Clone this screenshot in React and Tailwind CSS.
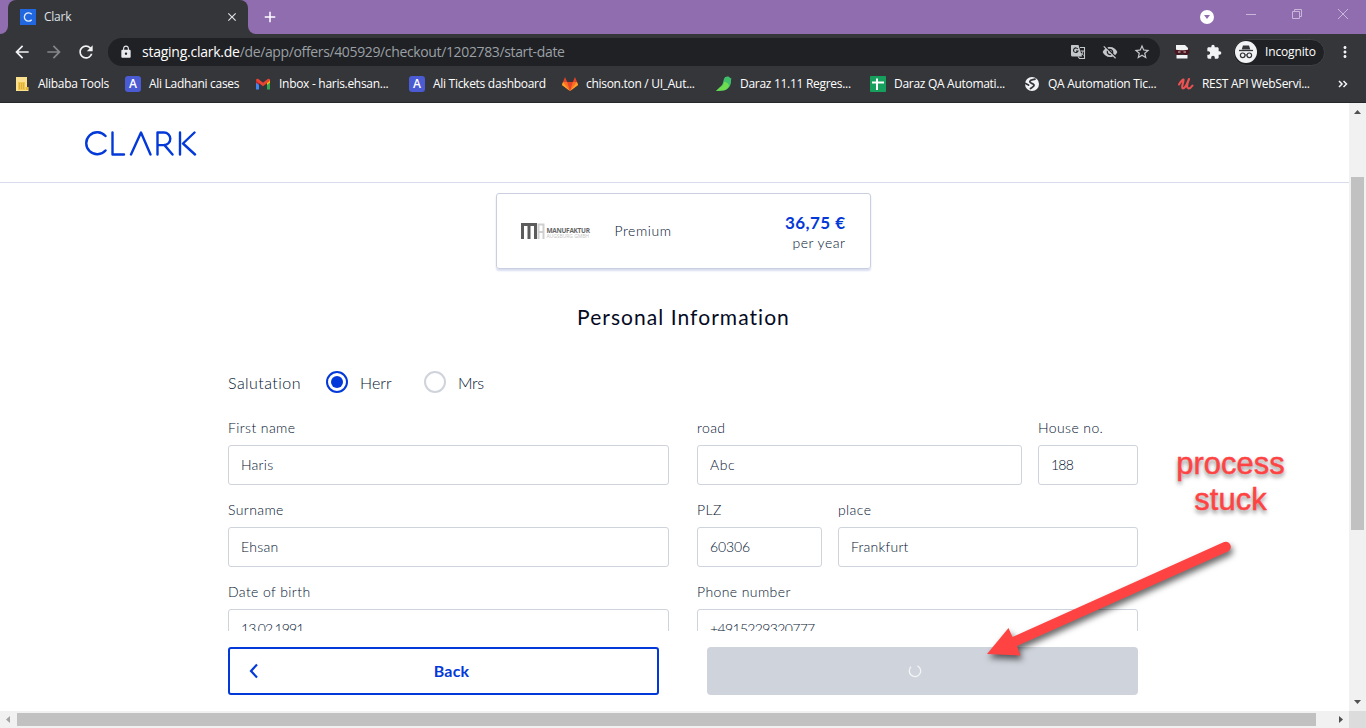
import React from "react";
import {
  MdArrowBack, MdArrowForward, MdRefresh, MdLock, MdVisibilityOff,
  MdStarBorder, MdExtension, MdMoreVert, MdClose, MdAdd,
} from "react-icons/md";

const Svg = ({ w = 16, h = 16, vb, className = "", children }) => (
  <svg width={w} height={h} viewBox={vb || `0 0 ${w} ${h}`} className={`shrink-0 ${className}`} fill="none">
    {children}
  </svg>
);

const FolderIcon = () => (
  <Svg>
    <path d="M2 1h11v10h1.500v4H2z" fill="#fbe08d" />
    <path d="M11.500 11h2.500v3h-2.500z" fill="#e9b93c" />
    <path d="M4 6h7v8H4z" fill="#f0c653" />
    <path d="M5 8h1M7 8h1M9 8h1M5 10h1M7 10h1M9 10h1M5 12h1M7 12h1M9 12h1" stroke="#c99b27" />
  </Svg>
);
const AIcon = () => (
  <span className="flex h-4 w-4 shrink-0 items-center justify-center rounded-[3px] bg-[#4a5bd4] text-[12px] leading-4 font-semibold text-white">A</span>
);
const GmailIcon = () => (
  <Svg>
    <path d="M1 4v9.500h3V7z" fill="#4285f4" />
    <path d="M12 7v6.500h3V4z" fill="#34a853" />
    <path d="M1 3.500 4 5.500V9L1 6.500z" fill="#c5221f" />
    <path d="M12 5.500l3-2v3L12 9z" fill="#fbbc04" />
    <path d="M1.300 3 3 2.800l5 4 5-4 1.700.2v2L8 10.200 1.300 5z" fill="#ea4335" />
  </Svg>
);
const GitlabIcon = () => (
  <Svg>
    <path d="M8 15 0 9 1 6h14l1 3z" fill="#fc6d26" />
    <path d="M8 15 0 9l1-3z" fill="#fca326" />
    <path d="M8 15l8-6-1-3z" fill="#fca326" />
    <path d="M8 15 5.200 6h5.600z" fill="#e24329" />
    <path d="M1 6 3 1l2.200 5zM15 6l-2-5-2.200 5z" fill="#e24329" />
  </Svg>
);
const BirdIcon = () => (
  <Svg>
    <path d="M8 3c1-3 5-3 6-1l1.500.5L15 4c.5 6-3 10-8 10.500L0 15l4-4c3-2 3-5 4-8z" fill="#3fbf6a" />
    <path d="M8 6c3 0 5 2 5 4-1.500 3-4 4.500-7 4.500L0 15l4.500-4C7 9 8 8 8 6z" fill="#6fdc50" />
  </Svg>
);
const SheetIcon = () => (
  <Svg>
    <rect width="16" height="16" rx="1" fill="#17a05d" />
    <path d="M7 2.500v11.500M2 6.500h12" stroke="#fff" strokeWidth="2" />
  </Svg>
);
const GlobeIcon = () => (
  <Svg>
    <circle cx="8" cy="8" r="7" fill="#f1f3f4" />
    <path d="M11 3.200C9 4 6.500 3.500 5.800 5.500c-.5 1.800 3.700 1.700 4.200 3.500.3 1.500-2 2.500-3.500 3.500M1.500 7.500l3 1.500" stroke="#35363a" strokeWidth="1.800" strokeLinecap="round" />
  </Svg>
);
const UdemyIcon = () => (
  <Svg>
    <path d="M1 8.500C2.500 6 4 4 5.500 3.500 6.500 4 2.500 12 5 12.500c2.500 0 5-7 6-9.500-1.500 4-3 9-.5 9.500 1.500 0 3-1.500 4-3" stroke="#ec5252" strokeWidth="2.100" strokeLinecap="round" strokeLinejoin="round" />
  </Svg>
);
const TranslateIcon = ({ className }) => (
  <Svg className={className}>
    <path d="M1.500 1h7l3.500 11.500H2.500a1.500 1.500 0 0 1-1.500-1.500V1.500z" fill="#c4c7ca" />
    <path d="M7.800 5A2.300 2.300 0 1 0 8 7H6" stroke="#202124" strokeWidth="1.100" />
    <path d="M10 3.500h4.500v11H9.500L8 12.500" stroke="#c4c7ca" strokeWidth="1.100" />
    <path d="M10.500 7h3.500M13 7c-.3 2-1 3-2.300 4.500M11.500 9l2 2.500" stroke="#c4c7ca" />
  </Svg>
);

const BOOKMARKS = [
  { icon: <FolderIcon />, text: "Alibaba Tools", cls: "w-[111px]" },
  { icon: <AIcon />, text: "Ali Ladhani cases", cls: "w-[130px]" },
  { icon: <GmailIcon />, text: "Inbox - haris.ehsan...", cls: "w-[154px]" },
  { icon: <AIcon />, text: "Ali Tickets dashboard", cls: "w-[153px]" },
  { icon: <GitlabIcon />, text: "chison.ton / UI_Aut...", cls: "w-[154px]" },
  { icon: <BirdIcon />, text: "Daraz 11.11 Regres...", cls: "w-[154px]" },
  { icon: <SheetIcon />, text: "Daraz QA Automati...", cls: "w-[154px]" },
  { icon: <GlobeIcon />, text: "QA Automation Tic...", cls: "w-[154px]" },
  { icon: <UdemyIcon />, text: "REST API WebServi...", cls: "w-[154px]" },
];

const TabStrip = () => (
  <div className="flex h-[34px] bg-[#8f6dae]">
    <div className="flex w-2 items-end bg-[#35363a]">
      <div className="h-[34px] w-2 rounded-br-[8px] bg-[#8f6dae]" />
    </div>
    <div className="w-[240px] bg-[#8f6dae]">
      <div className="flex h-[34px] items-center rounded-t-[8px] bg-[#35363a] pr-[9px] pl-3">
        <span className="flex h-4 w-4 items-center justify-center bg-[#2168e0]">
          <Svg w={12} h={12}><path d="M9.700 3.200A4.200 4.200 0 1 0 9.700 8.800" stroke="#e6eefc" strokeWidth="1.300" /></Svg>
        </span>
        <span className="ml-2 flex-1 text-[12px] tracking-[-0.25px] text-[#dfe1e5]">Clark</span>
        <MdClose className="h-[14px] w-[14px] text-[#dfe1e5]" />
      </div>
    </div>
    <div className="w-2 bg-[#35363a]">
      <div className="h-[34px] w-2 rounded-bl-[8px] bg-[#8f6dae]" />
    </div>
    <div className="flex flex-1 items-center pl-[5px]">
      <MdAdd className="h-[18px] w-[18px] text-white" />
    </div>
    <Svg w={166} h={34} className="text-[#c9b6d9]">
      <circle cx="7" cy="17" r="7" fill="#fff" />
      <path d="M4 15h6l-3 4z" fill="#8f6dae" />
      <path d="M46 14.500h10M92.500 11.500h7v7h-7zM94.500 11v-1.500h7v7H100M138 9l10 10M148 9l-10 10" stroke="currentColor" />
    </Svg>
  </div>
);

const Toolbar = () => (
  <div className="flex h-[36px] items-center bg-[#35363a] pl-3">
    <MdArrowBack className="h-5 w-5 text-[#f1f3f4]" />
    <MdArrowForward className="ml-3 h-5 w-5 text-[#85868a]" />
    <MdRefresh className="ml-3 h-5 w-5 text-[#f1f3f4]" />
    <div className="ml-3 flex h-7 w-[1052px] items-center rounded-full bg-[#202124] pr-[9px] pl-[11px]">
      <MdLock className="h-[14px] w-[14px] text-[#e8eaed]" />
      <span className="ml-[9px] flex-1 pb-px text-[14px] tracking-[-0.36px] text-[#9aa0a6]">
        <span className="tracking-[-0.25px] text-white">staging.clark.de</span>/de/app/offers/405929/checkout/1202783/start-date
      </span>
      <TranslateIcon className="mr-4 translate-x-px" />
      <MdVisibilityOff className="mr-4 h-4 w-4 translate-x-px text-[#c4c7ca]" />
      <MdStarBorder className="h-[18px] w-[18px] text-[#c4c7ca]" />
    </div>
    <Svg w={16} h={16} className="ml-[14px]">
      <path d="M2 1h9l3 3v4H2z" fill="#f1f3f4" />
      <path d="M2.500 11h11v3.500h-11z" fill="#f1f3f4" />
      <path d="M0.500 5.500c4 1 11 1 15 0 0 3-1 5.500-4.500 5.500L8 9.500 5 11c-3.500 0-4.500-2.500-4.500-5.500z" fill="#4a1620" />
      <path d="M4 8h2.500M9.500 8H12" stroke="#e8c9cd" />
    </Svg>
    <MdExtension className="ml-4 h-4 w-4 text-[#f1f3f4]" />
    <div className="ml-[11px] flex h-[27px] w-[92px] items-center rounded-full border border-[#3f4145] bg-[#202124] pl-px">
      <Svg w={22} h={22}>
        <circle cx="11" cy="11" r="11" fill="#f1f3f4" />
        <path d="M8 4.500h6l1.300 4H6.700z" fill="#35363a" />
        <path d="M4 9.500h14" stroke="#35363a" strokeWidth="1.300" />
        <circle cx="7.700" cy="14.300" r="2.300" stroke="#35363a" strokeWidth="1.200" />
        <circle cx="14.300" cy="14.300" r="2.300" stroke="#35363a" strokeWidth="1.200" />
        <path d="M10 14h2" stroke="#35363a" strokeWidth="1.200" />
      </Svg>
      <span className="ml-2 text-[12px] tracking-[-0.15px] text-white">Incognito</span>
    </div>
    <MdMoreVert className="ml-[11px] h-[18px] w-[18px] text-[#f1f3f4]" />
  </div>
);

const BookmarksBar = () => (
  <div className="flex h-[33px] items-center border-b border-[#26272a] bg-[#35363a] pb-1 pl-[14px]">
    {BOOKMARKS.map((b) => (
      <div key={b.text} className={`flex shrink-0 items-center ${b.cls}`}>
        {b.icon}
        <span className="ml-2 text-[12px] tracking-[-0.29px] whitespace-nowrap text-white">{b.text}</span>
      </div>
    ))}
    <Svg w={10} h={10} className="ml-[6px]"><path d="M1 2l3 3-3 3M5.500 2l3 3-3 3" stroke="#f1f3f4" strokeWidth="1.500" /></Svg>
  </div>
);

const Field = ({ label, value, cls, track = "tracking-[0.25px]" }) => (
  <div className={cls}>
    <div className="h-[26px] text-[14px] leading-[18px] tracking-[0.4px]">{label}</div>
    <div className={`flex h-10 items-center rounded-[3px] border border-[#cfd3dc] px-3 pb-[2px] text-[14px] ${track}`}>{value}</div>
  </div>
);

const Form = () => (
  <div className="mx-auto flex w-[910px] flex-col font-light text-[#02122f]">
    <div className="mt-[40px] flex h-[24px] items-center text-[16px] tracking-[0.45px]">
      <span className="w-[98px] pt-px">Salutation</span>
      <span className="flex h-[22px] w-[22px] items-center justify-center rounded-full border-2 border-[#0439d9]">
        <span className="h-3 w-3 rounded-full bg-[#0439d9]" />
      </span>
      <span className="ml-3 w-[64px] pt-px tracking-[0.1px]">Herr</span>
      <span className="h-[22px] w-[22px] rounded-full border-2 border-[#cfd3dc]" />
      <span className="ml-3 pt-px tracking-[-0.3px]">Mrs</span>
    </div>
    <div className="mt-[25px] flex gap-7">
      <div className="flex w-[441px] flex-col gap-4">
        <Field label="First name" value="Haris" />
        <Field label="Surname" value="Ehsan" />
        <Field label="Date of birth" value="13.02.1991" track="tracking-[-0.9px]" />
      </div>
      <div className="flex w-[441px] flex-col gap-4">
        <div className="flex gap-4">
          <Field label="road" value="Abc" cls="w-[325px]" track="tracking-[0.6px]" />
          <Field label="House no." value="188" cls="w-[100px]" track="tracking-[-0.8px]" />
        </div>
        <div className="flex gap-4">
          <Field label="PLZ" value="60306" cls="w-[125px]" track="tracking-[-0.1px]" />
          <Field label="place" value="Frankfurt" cls="w-[300px]" />
        </div>
        <Field label="Phone number" value="+4915229320777" track="tracking-[-0.65px]" />
      </div>
    </div>
  </div>
);

const OfferCard = () => (
  <div className="mx-auto flex h-[76px] w-[375px] items-center rounded-[3px] border border-[#c9cfe0] pr-6 pl-6 text-[#02122f] shadow-[0_2px_2px_#d9def0]">
    <div className="flex w-[71px] items-center gap-[2px]">
      <Svg w={24} h={16}>
        <path d="M1.500 16V1.500h13V16M8 1v15" stroke="#5c5c5c" strokeWidth="3" />
        <path d="M17.500 16V1.500h5V16M17 9h6" stroke="#cfcfcf" strokeWidth="2" />
      </Svg>
      <div className="flex flex-col font-['Open_Sans',sans-serif]">
        <span className="mt-[4px] text-[6.500px] leading-[7px] font-bold tracking-[-0.3px] text-[#666]">MANUFAKTUR</span>
        <span className="text-[5px] leading-[5px] tracking-[-0.05px] text-[#c4c4c4]">AUGSBURG GMBH</span>
      </div>
    </div>
    <span className="ml-[23px] flex-1 pb-[2px] text-[14px] font-light tracking-[0.55px]">Premium</span>
    <div className="flex flex-col items-end pt-[3px]">
      <span className="text-[17px] leading-5 font-bold tracking-[0.45px] text-[#0439d9]">36,75 €</span>
      <span className="text-[14px] leading-5 font-light tracking-[0.5px]">per year</span>
    </div>
  </div>
);

const Annotation = () => (
  <>
    <div className="absolute top-[446px] left-[1149px] w-[163px] text-center font-['Liberation_Sans',sans-serif] text-[31px] leading-9 text-[#ff4343] [-webkit-text-stroke:0.4px_#ff4343] [text-shadow:0px_3px_4px_rgba(0,0,0,0.5)]">
      process
      <br />
      stuck
    </div>
    <svg className="absolute top-[530px] left-[970px] [filter:drop-shadow(2px_4px_3px_rgba(0,0,0,0.6))]" width="280" height="150" viewBox="970 530 280 150">
      <path d="M987 654l21.500-26 4 9L1223.500 542.300a5 5 0 0 1 4.400 9.200L1017 646l3.500 9.500z" fill="#ff4343" />
    </svg>
  </>
);

export default function App() {
  return (
    <div className="relative flex h-[728px] w-[1366px] flex-col overflow-hidden bg-white font-['Open_Sans',sans-serif]">
      <TabStrip />
      <Toolbar />
      <BookmarksBar />
      <div className="flex h-[608px]">
        <div className="flex w-[1349px] flex-col font-['Lato',sans-serif]">
          <header className="flex h-20 items-center border-b border-[#d9dcee] pl-[83px]">
            <Svg w={114} h={26}>
              <path d="M22.500 6A11 11 0 1 0 22.500 20.500M29.500 2.500v22H41M48 24.500 58 2.500 67.500 24.500M74.500 24.500v-22h6.500a6.300 6.300 0 0 1 0 12.600h-6.500M81.500 15.100l8 9.400M97 2.500v22M111.500 2.500 100 13.500l12 11" stroke="#0439d9" strokeWidth="2.400" strokeLinecap="round" strokeLinejoin="round" />
            </Svg>
          </header>
          <main className="h-[448px] overflow-hidden pr-[1px] pt-[10px]">
            <div className="pl-[18px]"><OfferCard /></div>
            <h1 className="mt-[36px] mb-px pl-[19px] text-center text-[21px] leading-6 tracking-[1.05px] text-[#050a1f]">Personal Information</h1>
            <div className="pl-[18px]"><Form /></div>
          </main>
          <footer className="mx-auto flex w-[910px] translate-x-[8px] justify-between pt-4">
            <div className="flex h-12 w-[431px] items-center rounded-[3px] border-2 border-[#0439d9] text-[16px] font-bold tracking-[0.2px] text-[#0439d9]">
              <Svg w={10} h={16} className="ml-[19px]"><path d="M8 1.500 2 8l6 6.500" stroke="#0439d9" strokeWidth="2.200" /></Svg>
              <span className="flex-1 pr-[12px] text-center">Back</span>
            </div>
            <div className="flex h-12 w-[431px] items-center justify-center rounded-[4px] bg-[#cfd3db] pr-[15px]">
              <Svg w={14} h={14}><path d="M9.500 1.800A5.700 5.700 0 1 1 3 2.800" stroke="#f4f5f7" strokeWidth="1.300" /></Svg>
            </div>
          </footer>
        </div>
        <div className="flex w-[17px] flex-col items-center bg-[#f1f1f1]">
          <Svg w={17} h={17}><path d="M5 11h7L8.500 7z" fill="#505050" /></Svg>
          <div className="mt-[57px] h-[353px] w-[13px] bg-[#c1c1c1]" />
          <Svg w={17} h={17} className="mt-auto"><path d="M5 6h7l-3.500 4z" fill="#505050" /></Svg>
        </div>
      </div>
      <div className="flex h-[17px] items-center bg-[#f1f1f1]">
        <Svg w={17} h={17}><path d="M10 5v7L6 8.500z" fill="#a3a3a3" /></Svg>
        <div className="h-[13px] w-[1299px] bg-[#c1c1c1]" />
        <Svg w={17} h={17} className="ml-4"><path d="M7 5v7l4-3.500z" fill="#505050" /></Svg>
        <div className="h-[17px] w-[17px] bg-[#dcdcdc]" />
      </div>
      <Annotation />
    </div>
  );
}
